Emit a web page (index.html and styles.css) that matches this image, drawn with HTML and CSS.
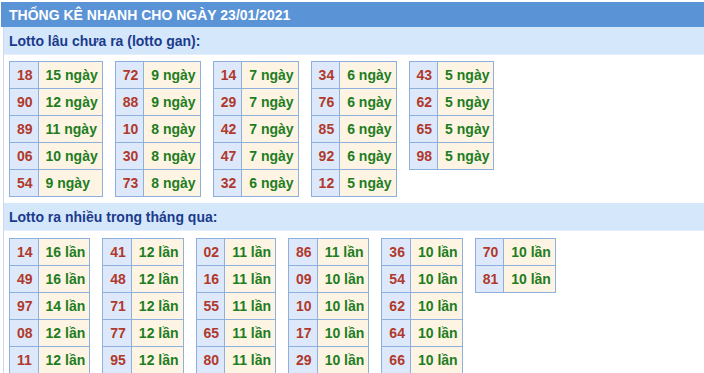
FILE: index.html
```html
<!DOCTYPE html>
<html>
<head>
<meta charset="utf-8">
<link rel="stylesheet" href="styles.css">
</head>
<body>
<div class="box">
  <div class="title">THỐNG KÊ NHANH CHO NGÀY 23/01/2021</div>
  <div class="frame">
    <div class="sec">Lotto lâu chưa ra (lotto gan):</div>
    <div class="grid">
      <table><tr><td class="n">18</td><td class="v">15 ngày</td></tr><tr><td class="n">90</td><td class="v">12 ngày</td></tr><tr><td class="n">89</td><td class="v">11 ngày</td></tr><tr><td class="n">06</td><td class="v">10 ngày</td></tr><tr><td class="n">54</td><td class="v">9 ngày</td></tr></table>
      <table><tr><td class="n">72</td><td class="v">9 ngày</td></tr><tr><td class="n">88</td><td class="v">9 ngày</td></tr><tr><td class="n">10</td><td class="v">8 ngày</td></tr><tr><td class="n">30</td><td class="v">8 ngày</td></tr><tr><td class="n">73</td><td class="v">8 ngày</td></tr></table>
      <table><tr><td class="n">14</td><td class="v">7 ngày</td></tr><tr><td class="n">29</td><td class="v">7 ngày</td></tr><tr><td class="n">42</td><td class="v">7 ngày</td></tr><tr><td class="n">47</td><td class="v">7 ngày</td></tr><tr><td class="n">32</td><td class="v">6 ngày</td></tr></table>
      <table><tr><td class="n">34</td><td class="v">6 ngày</td></tr><tr><td class="n">76</td><td class="v">6 ngày</td></tr><tr><td class="n">85</td><td class="v">6 ngày</td></tr><tr><td class="n">92</td><td class="v">6 ngày</td></tr><tr><td class="n">12</td><td class="v">5 ngày</td></tr></table>
      <table><tr><td class="n">43</td><td class="v">5 ngày</td></tr><tr><td class="n">62</td><td class="v">5 ngày</td></tr><tr><td class="n">65</td><td class="v">5 ngày</td></tr><tr><td class="n">98</td><td class="v">5 ngày</td></tr></table>
    </div>
    <div class="sec">Lotto ra nhiều trong tháng qua:</div>
    <div class="grid g2">
      <table><tr><td class="n">14</td><td class="v">16 lần</td></tr><tr><td class="n">49</td><td class="v">16 lần</td></tr><tr><td class="n">97</td><td class="v">14 lần</td></tr><tr><td class="n">08</td><td class="v">12 lần</td></tr><tr><td class="n">11</td><td class="v">12 lần</td></tr></table>
      <table><tr><td class="n">41</td><td class="v">12 lần</td></tr><tr><td class="n">48</td><td class="v">12 lần</td></tr><tr><td class="n">71</td><td class="v">12 lần</td></tr><tr><td class="n">77</td><td class="v">12 lần</td></tr><tr><td class="n">95</td><td class="v">12 lần</td></tr></table>
      <table><tr><td class="n">02</td><td class="v">11 lần</td></tr><tr><td class="n">16</td><td class="v">11 lần</td></tr><tr><td class="n">55</td><td class="v">11 lần</td></tr><tr><td class="n">65</td><td class="v">11 lần</td></tr><tr><td class="n">80</td><td class="v">11 lần</td></tr></table>
      <table><tr><td class="n">86</td><td class="v">11 lần</td></tr><tr><td class="n">09</td><td class="v">10 lần</td></tr><tr><td class="n">10</td><td class="v">10 lần</td></tr><tr><td class="n">17</td><td class="v">10 lần</td></tr><tr><td class="n">29</td><td class="v">10 lần</td></tr></table>
      <table><tr><td class="n">36</td><td class="v">10 lần</td></tr><tr><td class="n">54</td><td class="v">10 lần</td></tr><tr><td class="n">62</td><td class="v">10 lần</td></tr><tr><td class="n">64</td><td class="v">10 lần</td></tr><tr><td class="n">66</td><td class="v">10 lần</td></tr></table>
      <table><tr><td class="n">70</td><td class="v">10 lần</td></tr><tr><td class="n">81</td><td class="v">10 lần</td></tr></table>
    </div>
  </div>
</div>
</body>
</html>
```
FILE: styles.css
```css
html, body {
  margin: 0;
  padding: 0;
  background: #ffffff;
  font-family: "Liberation Sans", Arial, sans-serif;
  font-weight: bold;
  font-size: 14px;
}
.box {
  margin-top: 2px;
  margin-left: 1px;
}
.title {
  height: 25px;
  line-height: 26px;
  background: #5b94d6;
  color: #ffffff;
  padding-left: 8px;
  font-size: 14px;
}
.frame {
  margin-left: 2px;
  border-left: 1px solid #cdd9e8;
}
.sec {
  height: 28px;
  line-height: 28px;
  background: #d5e7fb;
  color: #1b3b8c;
  padding-left: 5px;
  font-size: 14px;
  border-bottom: 1px solid #e6eef8;
  box-sizing: border-box;
}
.grid {
  display: flex;
  align-items: flex-start;
  gap: 12px;
  padding: 6px 0 6px 5px;
}
.g2 {
  padding-top: 7px;
}
table {
  border-collapse: collapse;
}
td {
  border: 1px solid #8eb0de;
  height: 26px;
  padding: 0;
  line-height: 26px;
  white-space: nowrap;
  font-size: 14px;
}
td.n {
  background: #dde9fb;
  color: #b0392b;
  padding: 0 5px 0 7px;
}
td.v {
  background: #fdf4e3;
  color: #1e7d1e;
  padding: 0 4px 0 7px;
}
```
